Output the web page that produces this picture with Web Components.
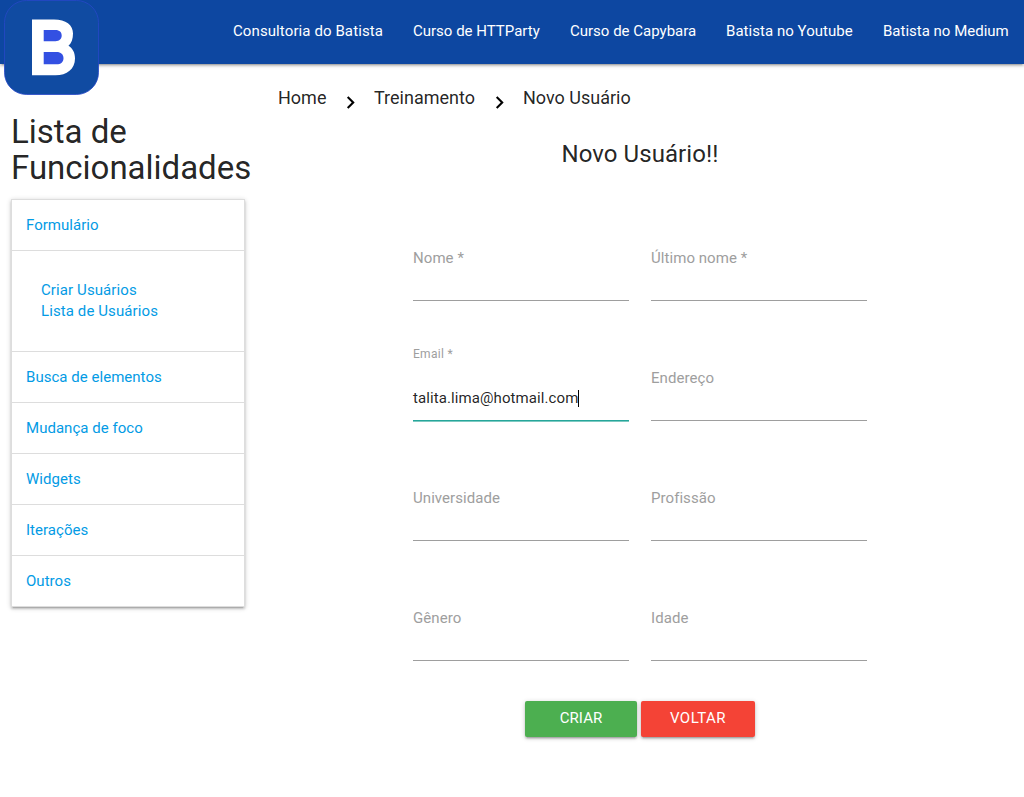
<!DOCTYPE html>
<html lang="pt-BR">
<head>
<meta charset="utf-8">
<title>Novo Usuário</title>
<style>
html{font-size:14.5px}
body{margin:0;background:#fff;color:rgba(0,0,0,.87);font-family:Roboto,sans-serif;line-height:1.5;overflow:hidden}
</style>
</head>
<body>
<app-page></app-page>
<script>
function define(name, html, setup) {
  const t = document.createElement('template');
  t.innerHTML = '<style>*{box-sizing:border-box}</style>' + html;
  customElements.define(name, class extends HTMLElement {
    constructor() {
      super();
      this.attachShadow({mode: 'open'}).appendChild(t.content.cloneNode(true));
    }
    connectedCallback() { if (setup) setup(this, this.shadowRoot); }
  });
}

define('app-logo', `<style>:host{display:block;width:95px;height:95px}svg{display:block}</style>
<svg width="95" height="95" viewBox="0 0 95 95">
<rect x=".5" y=".5" width="94" height="94" rx="22" fill="#104ba2" stroke="#2748c8" stroke-width=".8"/>
<path fill="#fff" d="M28 19.500H50C62 19.500 69 25 69 33.500C69 39 67.500 43 64.500 45.700C68.700 48.400 71 52.500 71 58.500C71 69 63 75.300 51.500 75.300H28Z"/>
<path fill="#3350e2" d="M39.700 30H51.500C55.500 30 57.700 32.200 57.700 35.600S55.500 41.300 51.500 41.300H39.700ZM39.700 52H52.500C57 52 59.500 54.500 59.500 58.200S57 64.300 52.500 64.300H39.700Z"/>
</svg>`);

define('nav-link', `<style>:host{display:block;padding:0 15px;color:#fff;font-size:15px;line-height:62px;white-space:nowrap}
:host(:nth-child(1)){width:180px;letter-spacing:.1px}
:host(:nth-child(2)){width:157px}
:host(:nth-child(3)){width:156px}
:host(:nth-child(4)){width:157px;letter-spacing:.04px}
:host(:nth-child(5)){width:156px}</style><slot></slot>`);

define('nav-bar', `<style>
:host{display:flex;justify-content:space-between;align-items:flex-start;height:64px;padding-left:4px;background:#0d47a1;
box-shadow:0 2px 2px 0 rgba(0,0,0,.14),0 3px 1px -2px rgba(0,0,0,.12),0 1px 5px 0 rgba(0,0,0,.2);position:relative}
nav{display:flex}</style><app-logo></app-logo><nav><slot></slot></nav>`);

define('side-item', `<style>:host{display:block;height:51px;border-bottom:1px solid #ddd;padding:0 14px;color:#039be5;font-size:15px;line-height:51px;letter-spacing:.03px}</style><slot></slot>`);

define('side-sub', `<style>:host{display:block;height:101px;border-bottom:1px solid #ddd;padding:29px;color:#039be5;font-size:15px;line-height:21px;letter-spacing:.1px}
::slotted(div){white-space:nowrap}</style><slot></slot>`);

define('side-menu', `<style>
:host{display:block;width:256px;padding:49.500px 11px 0}
h4{font-size:33.060px;line-height:36.370px;font-weight:400;margin:0 0 13px;white-space:nowrap;letter-spacing:-.03px}
section{border:1px solid #ddd;border-bottom:0;box-shadow:0 2px 2px 0 rgba(0,0,0,.14),0 3px 1px -2px rgba(0,0,0,.12),0 1px 5px 0 rgba(0,0,0,.2)}
</style><h4>Lista de<br>Funcionalidades</h4>
<section>
<side-item>Formulário</side-item>
<side-sub><div>Criar Usuários</div><div>Lista de Usuários</div></side-sub>
<side-item>Busca de elementos</side-item><side-item>Mudança de foco</side-item><side-item>Widgets</side-item><side-item>Iterações</side-item><side-item>Outros</side-item>
</section>`);

define('bread-crumbs', `<style>
:host{display:flex;height:56px;padding-left:11px;font-size:18px;line-height:56px;white-space:nowrap}
svg{width:25px;height:25px;margin:20px 0 0 auto;flex:none}
span{display:flex}
.a{width:85px;margin-right:11px}.b{width:138px;margin-right:11px}
</style><span class="a">Home<svg viewBox="0 0 24 24"><path d="M10 6 8.590 7.410 13.170 12l-4.580 4.590L10 18l6-6z"/></svg></span><span class="b">Treinamento<svg viewBox="0 0 24 24"><path d="M10 6 8.590 7.410 13.170 12l-4.580 4.590L10 18l6-6z"/></svg></span><span>Novo Usuário</span>`);

define('text-field', `<style>
:host{display:flex;flex-direction:column;justify-content:flex-end;height:120px;padding-bottom:20px;font-size:15px}
label{color:#9e9e9e;line-height:20px;height:20px;margin-bottom:32px;white-space:nowrap;letter-spacing:.06px}
.line{height:1px;background:#9e9e9e}
.value{display:none;align-items:center;line-height:20px;height:20px;margin-bottom:12px;letter-spacing:.09px}
.value i{width:1px;height:17px;background:#000}
:host([value]) label{font-size:12px;margin-bottom:24px;letter-spacing:.3px}
:host([value]) .value{display:flex}
:host([value]) .line{background:#26a69a;box-shadow:0 1px 0 0 #7dcac2}
</style><label></label><div class="value"><span></span><i></i></div><div class="line"></div>`, (el, root) => {
  root.querySelector('label').textContent = el.getAttribute('label');
  root.querySelector('.value span').textContent = el.getAttribute('value') || '';
});

define('action-button', `<style>
:host{display:block;height:36px;border-radius:2px;color:#fff;text-align:center;line-height:35px;font-size:15px;letter-spacing:.5px;
box-shadow:0 2px 2px 0 rgba(0,0,0,.14),0 3px 1px -2px rgba(0,0,0,.12),0 1px 5px 0 rgba(0,0,0,.2)}
:host([kind=create]){width:112px;background:#4caf50;letter-spacing:.1px}
:host([kind=back]){width:114px;background:#f44336}
</style><slot></slot>`);

define('user-form', `<style>
:host{display:block;padding-top:10px}
h5{font-size:24px;line-height:36px;font-weight:400;text-align:center;margin:0 0 29px;letter-spacing:.08px}
.grid{display:grid;grid-template-columns:216px 216px;column-gap:22px;justify-content:center}
.actions{display:flex;justify-content:center;gap:4px;margin-top:20px}
</style><h5>Novo Usuário!!</h5>
<div class="grid">
<text-field label="Nome *"></text-field><text-field label="Último nome *"></text-field>
<text-field label="Email *" value="talita.lima@hotmail.com"></text-field><text-field label="Endereço"></text-field>
<text-field label="Universidade"></text-field><text-field label="Profissão"></text-field>
<text-field label="Gênero"></text-field><text-field label="Idade"></text-field>
</div>
<div class="actions"><action-button kind="create">CRIAR</action-button><action-button kind="back">VOLTAR</action-button></div>`);

define('app-page', `<style>
:host{display:block;height:797px}
.row{display:flex}
main{flex:1;min-width:0;padding:6px 0 0 11px}
user-form{margin-left:-11px}
</style>
<nav-bar><nav-link>Consultoria do Batista</nav-link><nav-link>Curso de HTTParty</nav-link><nav-link>Curso de Capybara</nav-link><nav-link>Batista no Youtube</nav-link><nav-link>Batista no Medium</nav-link></nav-bar>
<div class="row"><side-menu></side-menu><main><bread-crumbs></bread-crumbs><user-form></user-form></main></div>`);
</script>
</body>
</html>
